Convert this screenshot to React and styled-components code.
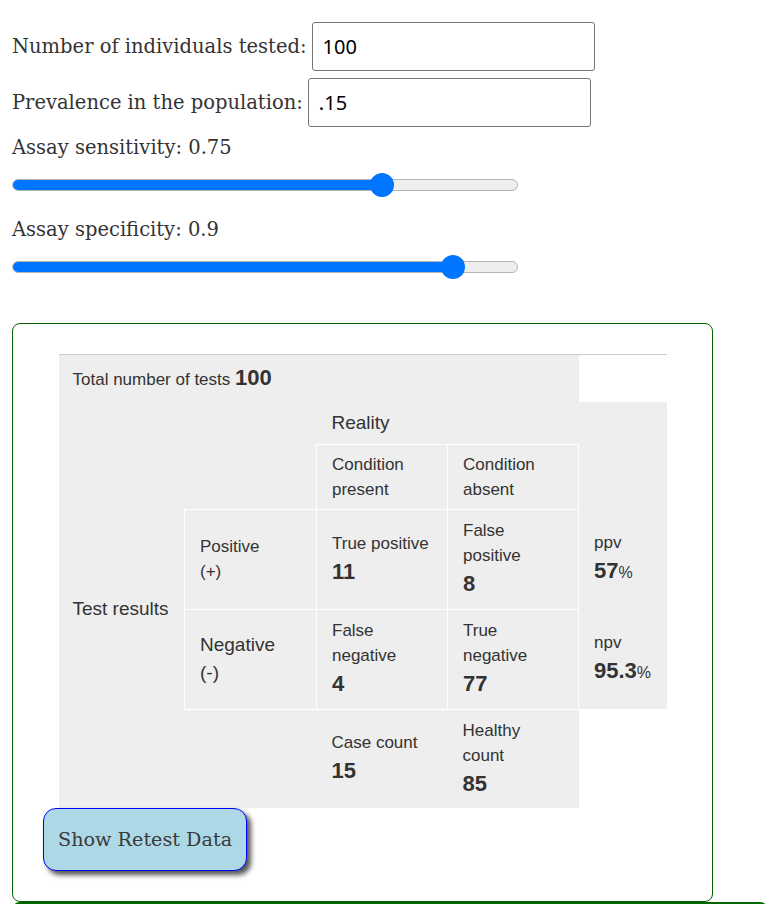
import React from "react";
import styled, { createGlobalStyle } from "styled-components";

const Global = createGlobalStyle`
  html, body { margin: 0; padding: 0; background: #fff; }
  body { font-family: "DejaVu Serif", Georgia, serif; color: #333; }
`;

const Page = styled.div`
  padding: 22px 0 0 12px;
`;

const FieldRow = styled.div`
  display: flex;
  align-items: center;
  gap: 5px;
  height: 49px;
  margin-bottom: ${(p) => p.$mb || 0}px;
`;

const Label = styled.span`
  font-size: 19.5px;
  line-height: 24px;
  color: #333;
  white-space: nowrap;
`;

const TextInput = styled.input`
  box-sizing: border-box;
  width: 283px;
  height: 49px;
  border: 1px solid #767676;
  border-radius: 3px;
  padding: 0 10px;
  font-family: "Noto Sans", "Open Sans", sans-serif;
  font-size: 20px;
  color: #000;
  outline: none;
`;

const SliderLabel = styled.div`
  font-size: 19.5px;
  line-height: 24px;
  color: #333;
  margin-top: ${(p) => p.$mt}px;
`;

const SliderWrap = styled.div`
  position: relative;
  width: 506px;
  height: 24px;
  margin-top: 13px;
  display: flex;
  align-items: center;
`;

const Track = styled.div`
  box-sizing: border-box;
  width: 100%;
  height: 12px;
  background: #eee;
  border: 1px solid #b4b4b4;
  border-radius: 6px;
  overflow: hidden;
  display: flex;
`;

const Fill = styled.div`
  height: 100%;
  background: #0075ff;
`;

const Thumb = styled.div`
  position: absolute;
  top: 0;
  width: 24px;
  height: 24px;
  margin-left: -12px;
  border-radius: 50%;
  background: #0075ff;
`;

function Slider({ value }) {
  const center = 15 + value * 473;
  return (
    <SliderWrap>
      <Track>
        <Fill style={{ width: center + "px" }} />
      </Track>
      <Thumb style={{ left: center + "px" }} />
    </SliderWrap>
  );
}

const Panel = styled.div`
  box-sizing: border-box;
  width: 701px;
  margin-top: 44px;
  border: 1px solid #006400;
  border-radius: 8px;
  padding: 30px;
`;

const NextPanel = styled.div`
  box-sizing: border-box;
  width: 756px;
  height: 80px;
  margin-top: 0;
  border-top: 2px solid #006400;
  border-left: 1px solid #006400;
  border-right: 1px solid #006400;
  border-radius: 8px 8px 0 0;
`;

const Table = styled.table`
  width: 608px;
  margin: 0 auto;
  table-layout: fixed;
  border-collapse: collapse;
  border-top: 1px solid #ccc;
  font-family: "Liberation Sans", Arial, sans-serif;
  color: #333;
`;

const Row = styled.tr`
  height: ${(p) => p.$h}px;
`;

const Cell = styled.td`
  background: ${(p) => (p.$blank ? "transparent" : "#eee")};
  border: ${(p) => (p.$boxed ? "1px solid #fff" : "none")};
  padding: 7px 15px;
  vertical-align: middle;
  white-space: ${(p) => (p.$nowrap ? "nowrap" : "normal")};
  font-size: ${(p) => (p.$big ? 19 : 17)}px;
  line-height: ${(p) => (p.$big ? 28 : 25)}px;
`;

const SideCell = styled(Cell)`
  padding-left: 14px;
  padding-right: 0;
`;

const Line = styled.span`
  display: block;
`;

const Value = styled.span`
  display: block;
  font-size: 22px;
  font-weight: bold;
  line-height: 32px;
`;

const InlineValue = styled.b`
  font-size: 22px;
  line-height: 32px;
`;

const Pct = styled.span`
  font-size: 16px;
  font-weight: normal;
`;

const RetestButton = styled.button`
  display: block;
  height: 63px;
  padding: 0 14px;
  background: #add8e6;
  border: 1px solid #0000ff;
  border-radius: 13px;
  box-shadow: 4px 4px 5px #555;
  font-family: "DejaVu Serif", Georgia, serif;
  font-size: 19.2px;
  color: #3a3a3a;
  cursor: pointer;
`;

export default function App() {
  return (
    <>
      <Global />
      <Page>
        <FieldRow $mb={7}>
          <Label>Number of individuals tested:</Label>
          <TextInput defaultValue="100" />
        </FieldRow>
        <FieldRow>
          <Label>Prevalence in the population:</Label>
          <TextInput defaultValue=".15" />
        </FieldRow>
        <SliderLabel $mt={9}>Assay sensitivity: 0.75</SliderLabel>
        <Slider value={0.75} />
        <SliderLabel $mt={21}>Assay specificity: 0.9</SliderLabel>
        <Slider value={0.9} />

        <Panel>
          <Table>
            <colgroup>
              <col style={{ width: 126 }} />
              <col style={{ width: 132 }} />
              <col style={{ width: 131 }} />
              <col style={{ width: 131 }} />
              <col style={{ width: 88 }} />
            </colgroup>
            <tbody>
              <Row $h={47}>
                <SideCell colSpan={4}>
                  Total number of tests <InlineValue>100</InlineValue>
                </SideCell>
                <Cell $blank />
              </Row>
              <Row $h={42}>
                <Cell />
                <Cell />
                <Cell colSpan={2} $big>Reality</Cell>
                <Cell />
              </Row>
              <Row $h={65}>
                <Cell />
                <Cell />
                <Cell $boxed>
                  <Line>Condition</Line>
                  <Line>present</Line>
                </Cell>
                <Cell $boxed>
                  <Line>Condition</Line>
                  <Line>absent</Line>
                </Cell>
                <Cell />
              </Row>
              <Row $h={100}>
                <SideCell rowSpan={2} $big $nowrap>Test results</SideCell>
                <Cell $boxed>
                  <Line>Positive</Line>
                  <Line>(+)</Line>
                </Cell>
                <Cell $boxed>
                  <Line>True positive</Line>
                  <Value>11</Value>
                </Cell>
                <Cell $boxed>
                  <Line>False</Line>
                  <Line>positive</Line>
                  <Value>8</Value>
                </Cell>
                <Cell>
                  <Line>ppv</Line>
                  <Value>
                    57<Pct>%</Pct>
                  </Value>
                </Cell>
              </Row>
              <Row $h={100}>
                <Cell $boxed $big>
                  <Line>Negative</Line>
                  <Line>(-)</Line>
                </Cell>
                <Cell $boxed>
                  <Line>False</Line>
                  <Line>negative</Line>
                  <Value>4</Value>
                </Cell>
                <Cell $boxed>
                  <Line>True</Line>
                  <Line>negative</Line>
                  <Value>77</Value>
                </Cell>
                <Cell>
                  <Line>npv</Line>
                  <Value>
                    95.3<Pct>%</Pct>
                  </Value>
                </Cell>
              </Row>
              <Row $h={99}>
                <Cell />
                <Cell />
                <Cell>
                  <Line>Case count</Line>
                  <Value>15</Value>
                </Cell>
                <Cell>
                  <Line>Healthy</Line>
                  <Line>count</Line>
                  <Value>85</Value>
                </Cell>
                <Cell $blank />
              </Row>
            </tbody>
          </Table>
          <RetestButton>Show Retest Data</RetestButton>
        </Panel>
        <NextPanel />
      </Page>
    </>
  );
}
